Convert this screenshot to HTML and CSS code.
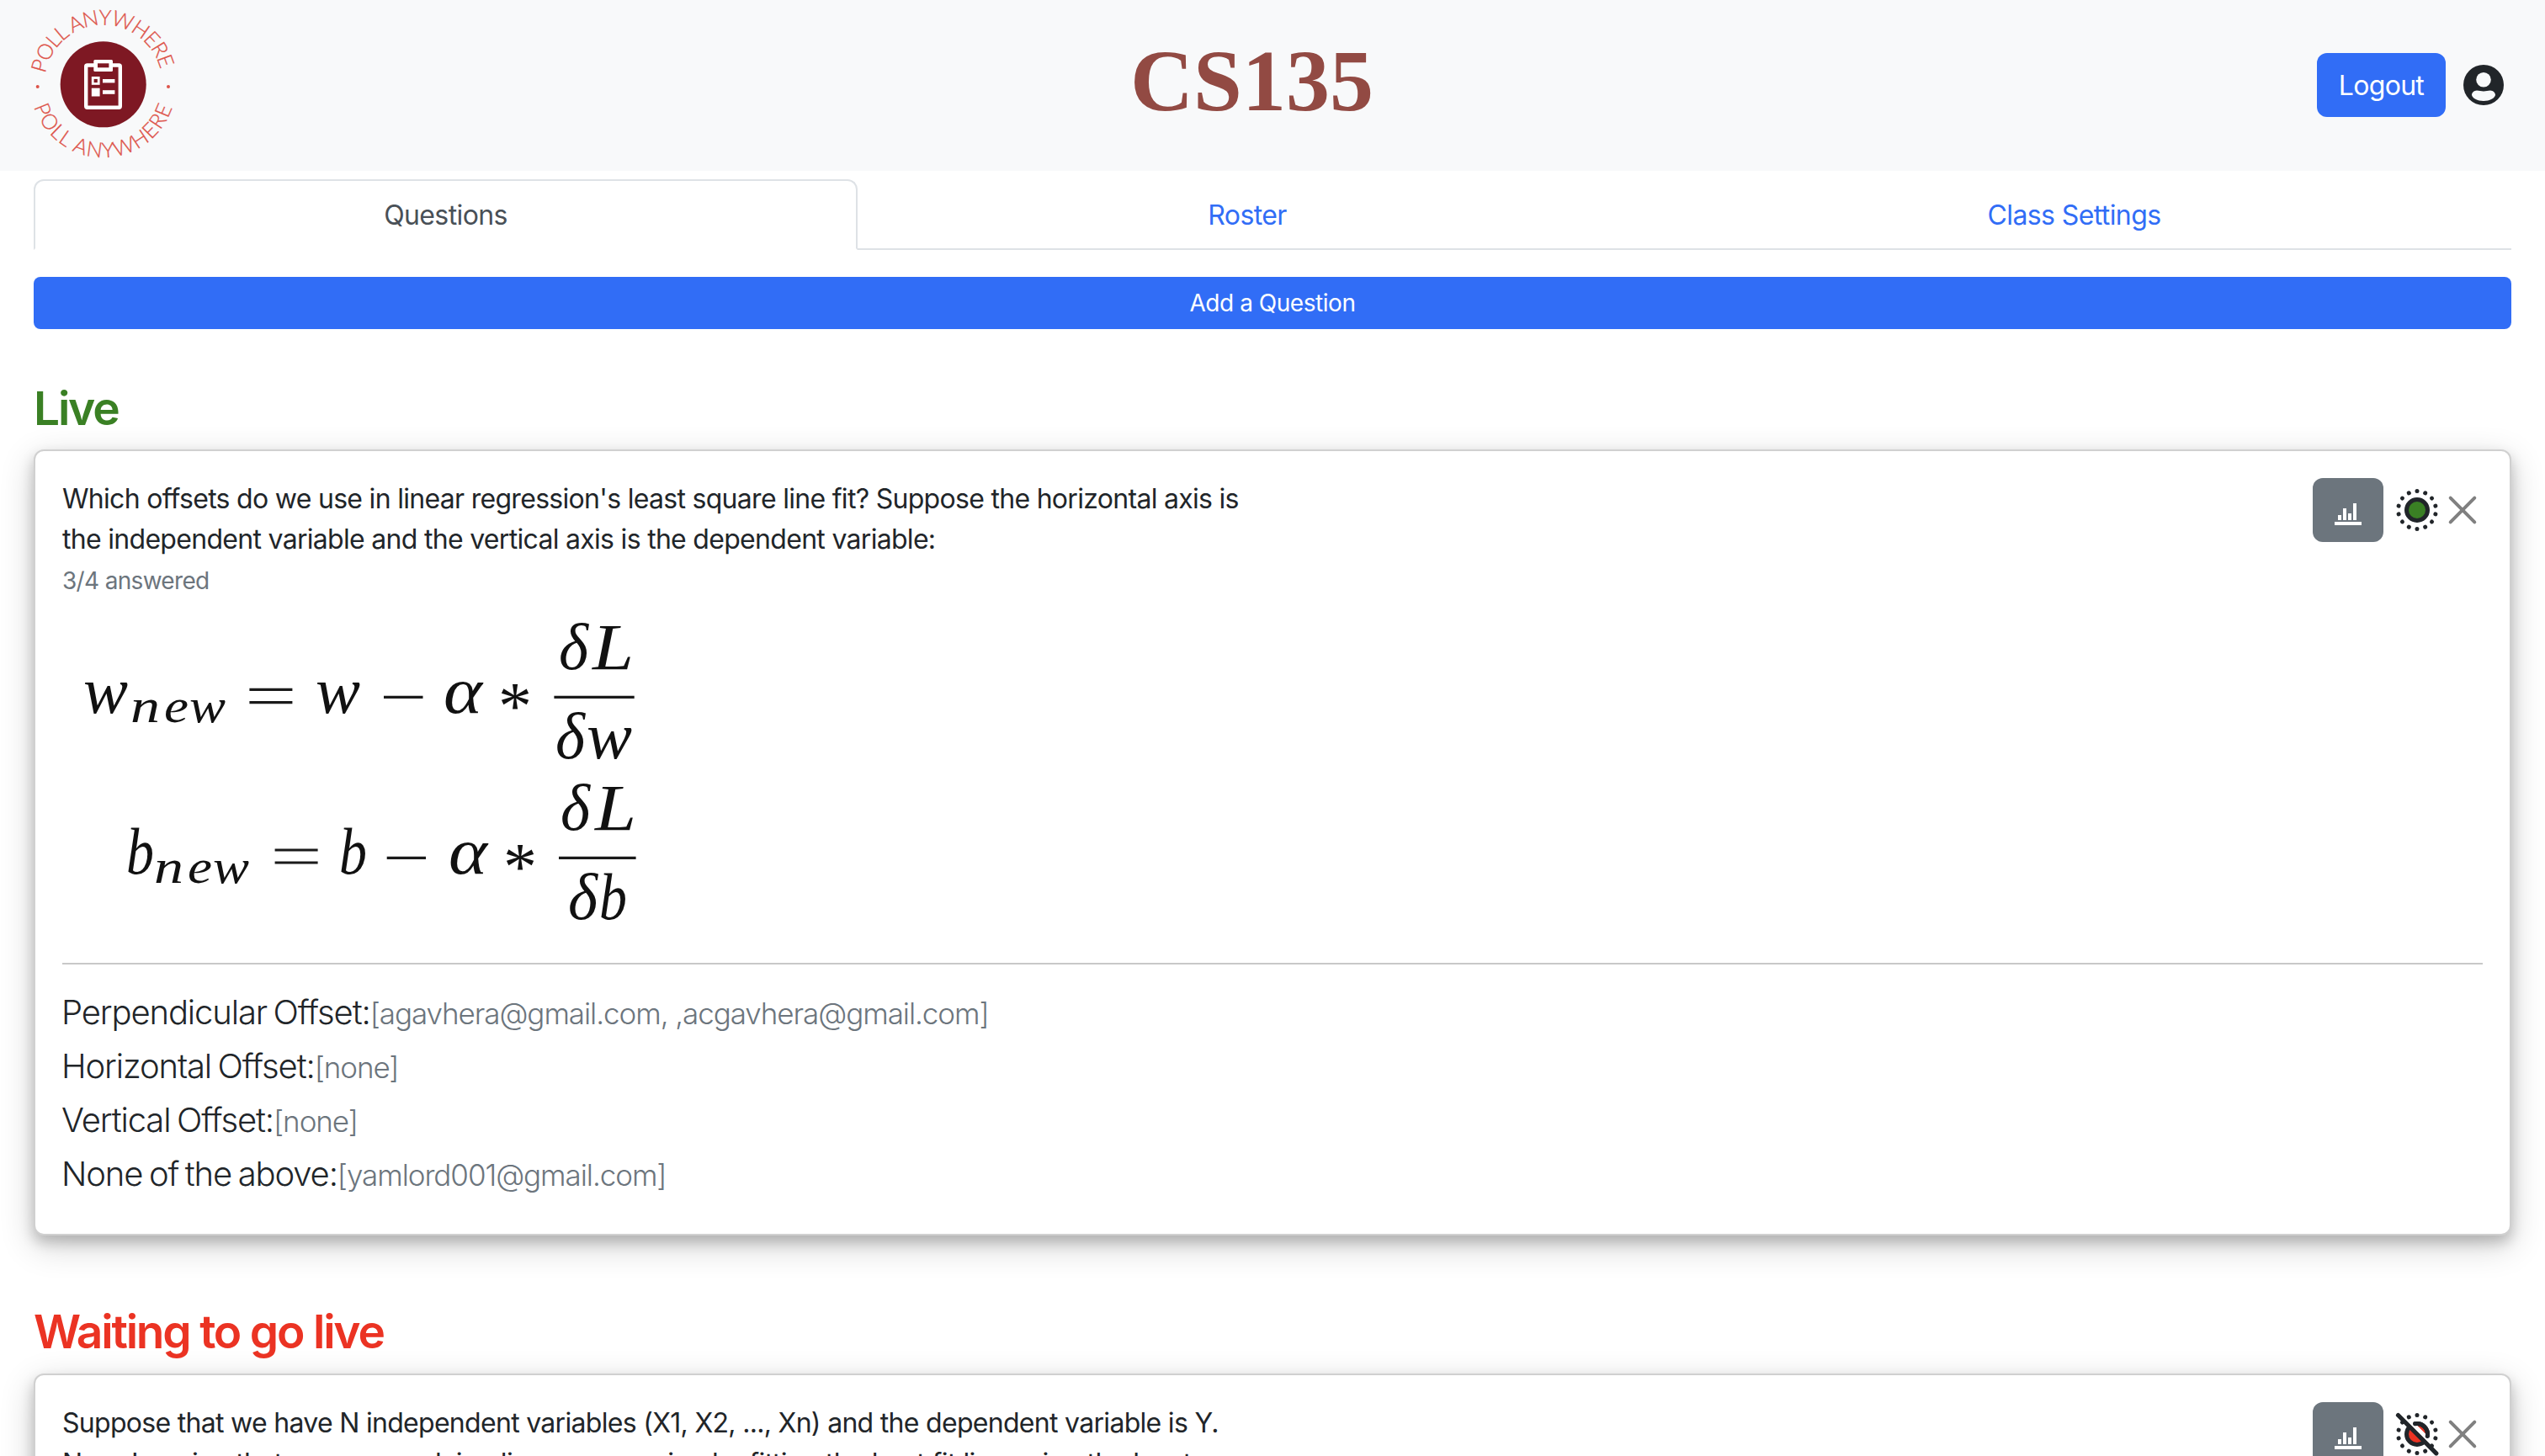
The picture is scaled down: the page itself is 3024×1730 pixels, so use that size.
FILE: index.html
```html
<!DOCTYPE html>
<html lang="en">
<head>
<meta charset="utf-8">
<title>Poll Anywhere - CS135</title>
<link rel="stylesheet" href="styles.css">
</head>
<body>
<header class="navbar">
  <svg class="logo" viewBox="0 0 210 203" role="img" aria-label="Poll Anywhere">
    <defs>
      <path id="arc-top" d="M53.6 88.500 A70 70 0 0 1 191.8 88.500"/>
      <path id="arc-bottom" d="M40 126 A86.5 86.5 0 0 0 205.4 126"/>
    </defs>
    <g class="logo-text">
      <text><textPath href="#arc-top" startOffset="1" textLength="190">POLL ANYWHERE</textPath></text>
      <text><textPath href="#arc-bottom" startOffset="1" textLength="217">POLL ANYWHERE</textPath></text>
    </g>
    <circle class="logo-dot" cx="44.7" cy="103" r="2"/>
    <circle class="logo-dot" cx="200" cy="103" r="2"/>
    <circle cx="122.7" cy="100.3" r="51" fill="#7e1823"/>
    <rect x="102.2" y="77.5" width="40.6" height="50.2" rx="1.5" fill="none" stroke="#fff" stroke-width="4.4"/>
    <rect x="111.3" y="71" width="22.7" height="14" rx="1.5" fill="#fff"/>
    <rect x="116" y="75.3" width="13.4" height="5" fill="#7e1823"/>
    <rect x="108.8" y="91" width="9.8" height="9.8" fill="#fff"/>
    <rect x="111.6" y="93.9" width="4.2" height="4.2" fill="#7e1823"/>
    <rect x="108.8" y="104.7" width="9.8" height="9.8" fill="#fff"/>
    <rect x="122" y="94" width="14.4" height="4.4" fill="#fff"/>
    <rect x="122" y="107.2" width="14.4" height="4.6" fill="#fff"/>
  </svg>
  <h1 class="course">CS135</h1>
  <div class="account">
    <button class="btn logout">Logout</button>
    <svg class="avatar" viewBox="0 0 48 48"><circle cx="24" cy="24" r="24" fill="#212529"/><circle cx="24" cy="17.7" r="8.8" fill="#f8f9fa"/><path d="M24 31.4C27 31.4 29 30.4 32 30.4C35.500 30.400 38 33.500 38 35.500C38 39.500 31 43 24 43S10 39.500 10 35.500C10 33.500 12.500 30.400 16 30.400C19 30.400 21 31.400 24 31.400Z" fill="#f8f9fa"/></svg>
  </div>
</header>

<main class="page">
  <nav class="tabs">
    <a class="tab tab-questions">Questions</a>
    <a class="tab tab-roster">Roster</a>
    <a class="tab tab-settings">Class Settings</a>
  </nav>
  <button class="btn add">Add a Question</button>

  <h2 class="section live">Live</h2>
  <section class="card">
    <div class="card-head">
      <div class="prompt">
        <p>Which offsets do we use in linear regression's least square line fit? Suppose the horizontal axis is<br>the independent variable and the vertical axis is the dependent variable:</p>
        <p class="answered">3/4 answered</p>
      </div>
      <div class="actions">
        <button class="btn chart"><svg viewBox="0 0 32 32" width="32" height="32" fill="#fff"><path d="M4 18h4v6H4zM10 10h4v14h-4zM16 16h4v8h-4zM22 4h4v20h-4zM0 26h32v4H0z"/></svg></button>
        <svg class="record" viewBox="-24 -24 48 48">
          <circle r="12.500" fill="#3a8024" stroke="#212529" stroke-width="5"/>
          <circle class="ring" r="22.400" pathLength="140"/>
        </svg>
        <svg class="close" viewBox="-24 -24 48 48"><path d="M-14.300-14.300L14.300 14.300M14.300-14.300L-14.300 14.300"/></svg>
      </div>
    </div>
    <svg class="formula" viewBox="74 712 700 400">
      <g class="big">
        <text x="99" y="847" textLength="53" lengthAdjust="spacingAndGlyphs">w</text>
        <text x="375" y="847" textLength="53" lengthAdjust="spacingAndGlyphs">w</text>
        <text x="527" y="847" textLength="46" lengthAdjust="spacingAndGlyphs">α</text>
        <text class="star" x="592" y="866">*</text>
        <text x="664" y="795" textLength="35" lengthAdjust="spacingAndGlyphs">δ</text>
        <text x="704" y="795" textLength="49" lengthAdjust="spacingAndGlyphs">L</text>
        <text x="660" y="901" textLength="35" lengthAdjust="spacingAndGlyphs">δ</text>
        <text x="697" y="901" textLength="54" lengthAdjust="spacingAndGlyphs">w</text>
        <text x="150" y="1038" textLength="33" lengthAdjust="spacingAndGlyphs">b</text>
        <text x="403" y="1038" textLength="33" lengthAdjust="spacingAndGlyphs">b</text>
        <text x="533" y="1038" textLength="46" lengthAdjust="spacingAndGlyphs">α</text>
        <text class="star" x="598" y="1057">*</text>
        <text x="666" y="986" textLength="35" lengthAdjust="spacingAndGlyphs">δ</text>
        <text x="707" y="986" textLength="49" lengthAdjust="spacingAndGlyphs">L</text>
        <text x="675" y="1092" textLength="35" lengthAdjust="spacingAndGlyphs">δ</text>
        <text x="712" y="1092" textLength="33" lengthAdjust="spacingAndGlyphs">b</text>
      </g>
      <g class="sub">
        <text x="155" y="858" textLength="35" lengthAdjust="spacingAndGlyphs">n</text>
        <text x="195" y="858" textLength="29" lengthAdjust="spacingAndGlyphs">e</text>
        <text x="225" y="858" textLength="43" lengthAdjust="spacingAndGlyphs">w</text>
        <text x="183" y="1049" textLength="35" lengthAdjust="spacingAndGlyphs">n</text>
        <text x="223" y="1049" textLength="29" lengthAdjust="spacingAndGlyphs">e</text>
        <text x="253" y="1049" textLength="43" lengthAdjust="spacingAndGlyphs">w</text>
      </g>
      <path class="rules" d="M296.400 819.300h51M296.400 834.700h51M456 828.300h46.500M658.400 828.300h95.300M326.600 1010h51M326.600 1025h51M459.700 1019.300h46.300M664 1019.300h91.600"/>
    </svg>
    <hr class="divider">
    <ul class="answers">
      <li>Perpendicular Offset:<span class="who">[agavhera@gmail.com, ,acgavhera@gmail.com]</span></li>
      <li>Horizontal Offset:<span class="who">[none]</span></li>
      <li>Vertical Offset:<span class="who">[none]</span></li>
      <li>None of the above:<span class="who">[yamlord001@gmail.com]</span></li>
    </ul>
  </section>

  <h2 class="section waiting">Waiting to go live</h2>
  <section class="card">
    <div class="card-head">
      <div class="prompt">
        <p>Suppose that we have N independent variables (X1, X2, ..., Xn) and the dependent variable is Y.<br><span class="loose">Now, Imagine that you are applying linear regression by fitting the best fit line using the least</span></p>
      </div>
      <div class="actions">
        <button class="btn chart"><svg viewBox="0 0 32 32" width="32" height="32" fill="#fff"><path d="M4 18h4v6H4zM10 10h4v14h-4zM16 16h4v8h-4zM22 4h4v20h-4zM0 26h32v4H0z"/></svg></button>
        <svg class="record" viewBox="-24 -24 48 48">
          <circle r="12.500" fill="#eb3323" stroke="#212529" stroke-width="5"/>
          <circle class="ring" r="22.400" pathLength="140"/>
          <path d="M-8-14.500L14.500 8" stroke="#fff" stroke-width="5.500"/>
          <path d="M-2.500-12.250A12.500 12.500 0 0 1 12.250 2.500" fill="none" stroke="#212529" stroke-width="5" stroke-linecap="round"/>
          <path d="M-22.500-22.500L22.800 22.800" stroke="#212529" stroke-width="5.200" stroke-linecap="round"/>
        </svg>
        <svg class="close" viewBox="-24 -24 48 48"><path d="M-14.300-14.300L14.300 14.300M14.300-14.300L-14.300 14.300"/></svg>
      </div>
    </div>
  </section>
</main>
</body>
</html>
```
FILE: styles.css
```css
* { box-sizing: border-box; }
html, body { margin: 0; height: 1730px; overflow: hidden; }
body {
  background: #fff;
  color: #212529;
  font: 400 32px/48px Inter, "Liberation Sans", sans-serif;
  letter-spacing: -0.7px;
}
h1, h2, p, ul { margin: 0; padding: 0; }
a { text-decoration: none; }

.navbar {
  display: grid;
  grid-template-columns: 1fr auto 1fr;
  align-items: center;
  height: 203px;
  padding: 0 49px 0 0;
  background: #f8f9fa;
}
.logo { display: block; width: 210px; height: 203px; }
.logo-text { fill: #dd544a; stroke: #dd544a; stroke-width: 0.3; font: 300 25px Lato, sans-serif; letter-spacing: 0; }
.logo-dot { fill: #dd544a; }
.course {
  padding: 0 0 11px;
  color: #924a43;
  font: 700 104px/120px "Liberation Serif", serif;
  letter-spacing: 0;
}
.account { display: flex; justify-content: flex-end; align-items: center; gap: 21px; padding-bottom: 1px; }
.avatar { display: block; width: 48px; height: 48px; }

.btn {
  display: block;
  padding: 0;
  border: 0;
  border-radius: 12px;
  background: #316df6;
  color: #fff;
  font: inherit;
  letter-spacing: inherit;
  text-align: center;
}
.logout { width: 153px; height: 76px; padding-top: 1px; }

.page { padding: 10px 40px 0; }
.tabs { display: flex; height: 84px; border-bottom: 2px solid #dee2e6; }
.tab { height: 84px; padding: 19px 0 0; color: #316df6; text-align: center; letter-spacing: -0.6px; }
.tab-questions {
  width: 979px;
  padding-top: 17px;
  border: 2px solid #dee2e6;
  border-bottom-color: #fff;
  border-radius: 12px 12px 0 0;
  background: #fff;
  color: #495057;
}
.tab-roster { width: 926px; }
.tab-settings { width: 1039px; }
.add {
  width: 100%;
  height: 62px;
  margin-top: 32px;
  border-radius: 8px;
  font-size: 28px;
  letter-spacing: -0.46px;
}

.section { font-size: 55px; font-weight: 600; line-height: 67px; letter-spacing: -2.2px; }
.live { margin: 61px 0 15px; color: #3a8024; }
.waiting { margin: 81px 0 16px; color: #eb3323; }

.card {
  padding: 32px;
  border: 2px solid #d0d0d0;
  border-radius: 12px;
  background: #fff;
  box-shadow: 0 8px 16px rgba(0, 0, 0, .2), 0 12px 40px rgba(0, 0, 0, .19);
}
.card-head { display: flex; justify-content: space-between; align-items: flex-start; }
.prompt { padding-top: 1px; white-space: nowrap; }
.loose { letter-spacing: -0.55px; }
.answered { padding-top: 1px; height: 47px; color: #6c757d; font-size: 28px; letter-spacing: -0.68px; }
.actions { display: flex; align-items: center; }
.chart { display: grid; place-items: center; width: 84px; height: 76px; margin-right: 16px; padding-top: 8px; background: #6c757d; }
.record { width: 48px; height: 48px; margin-right: 6px; overflow: visible; }
.ring {
  fill: none;
  stroke: #212529;
  stroke-width: 5;
  stroke-linecap: round;
  stroke-dasharray: 0.010 9.990;
  transform: rotate(-90deg);
}
.close { width: 48px; height: 48px; fill: none; stroke: #808080; stroke-width: 4; stroke-linecap: round; }

.formula { display: block; width: 700px; height: 400px; fill: #111; }
.formula text { font-family: "Liberation Serif", serif; font-style: italic; letter-spacing: 0; }
.big text { font-size: 79px; }
.sub text { font-size: 56px; }
.formula .star { font-style: normal; font-size: 80px; }
.rules { fill: none; stroke: #1a1a1a; stroke-width: 3.2; }

.divider { height: 2px; margin: 32px 0 25px; border: 0; background: #c8c8c8; }
.answers { height: 263px; margin-left: -1px; list-style: none; font-size: 40px; font-weight: 300; line-height: 64px; letter-spacing: -1.13px; word-spacing: -2.5px; }
.answers li { height: 64px; }
.who { color: #6c757d; font-size: 35px; letter-spacing: -1.07px; word-spacing: 0; }
```
